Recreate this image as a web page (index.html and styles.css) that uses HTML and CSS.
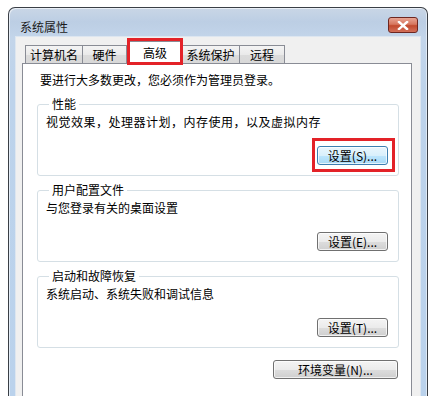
FILE: index.html
```html
<!DOCTYPE html>
<html lang="zh-CN">
<head>
<meta charset="utf-8">
<title>系统属性</title>
<link rel="stylesheet" href="styles.css">
</head>
<body>
<div class="window">
  <div class="titlebar">
    <span class="title">系统属性</span>
    <span class="close" aria-label="关闭">
      <svg width="12" height="9" viewBox="0 0 12 9"><path d="M2 1 L10 8 M10 1 L2 8" stroke="#fff" stroke-width="2.4" stroke-linecap="square" fill="none"/></svg>
    </span>
  </div>
  <div class="client">
    <div class="tabs">
      <div class="tab t1">计算机名</div>
      <div class="tab t2">硬件</div>
      <div class="tab t3 selected">高级</div>
      <div class="tab t4">系统保护</div>
      <div class="tab t5">远程</div>
    </div>
    <div class="panel">
      <div class="intro">要进行大多数更改，您必须作为管理员登录。</div>
      <div class="group">
        <div class="legend">性能</div>
        <div class="desc wide">视觉效果，处理器计划，内存使用，以及虚拟内存</div>
        <div class="actions"><span class="btn focused marked">设置(S)...</span></div>
      </div>
      <div class="group">
        <div class="legend">用户配置文件</div>
        <div class="desc">与您登录有关的桌面设置</div>
        <div class="actions"><span class="btn">设置(E)...</span></div>
      </div>
      <div class="group">
        <div class="legend">启动和故障恢复</div>
        <div class="desc">系统启动、系统失败和调试信息</div>
        <div class="actions"><span class="btn">设置(T)...</span></div>
      </div>
      <div class="envrow"><span class="btn env">环境变量(N)...</span></div>
    </div>
  </div>
</div>
</body>
</html>
```

FILE: styles.css
```css
html, body {
  margin: 0;
  padding: 0;
  background: #ffffff;
}
body {
  font-family: "Noto Sans CJK SC", "Liberation Sans", sans-serif;
  font-size: 12px;
  color: #000;
  overflow: hidden;
  height: 396px;
}
.window {
  margin: 7px 0 0 8px;
  width: 420px;
  height: 400px;
  box-sizing: border-box;
  border: 1px solid #3a3f46;
  border-bottom: none;
  border-radius: 7px 7px 0 0;
  background: linear-gradient(180deg, #c9d6e6 0px, #bccee4 14px, #c3d5ea 30px, #bdd3eb 80px, #bad2ec 100%);
  padding: 0 7px 0 7px;
  box-shadow: inset 1px 1px 0 rgba(255,255,255,0.6), inset -1px 0 0 rgba(255,255,255,0.5);
}
.titlebar {
  height: 29px;
  display: flex;
  align-items: flex-start;
  justify-content: space-between;
}
.title {
  margin: 12px 0 0 4px;
  line-height: 14px;
  color: #1b1b1b;
}
.close {
  margin: 9px 2px 0 0;
  width: 30px;
  height: 16px;
  box-sizing: border-box;
  border: 1px solid #6d2620;
  border-radius: 3px;
  background: linear-gradient(180deg, #e8a493 0%, #d7775f 45%, #c24a2e 55%, #d2705a 100%);
  display: flex;
  align-items: center;
  justify-content: center;
}
.client {
  background: #f0f0f0;
  height: 362px;
  padding: 8px 8px 0 6px;
  box-sizing: border-box;
  box-shadow: 0 0 0 1px #dde6f0;
}
.tabs {
  display: flex;
  align-items: flex-end;
  height: 19px;
  margin-bottom: -1px;
  padding-left: 3px;
}
.tab {
  box-sizing: border-box;
  height: 19px;
  border: 1px solid #898c95;
  border-left: none;
  background: linear-gradient(180deg, #f4f4f4 0%, #eaeaea 50%, #dcdcdc 51%, #d8d8d8 100%);
  text-align: center;
  line-height: 16px;
  padding-top: 1px;
  color: #000;
}
.t1 { width: 58px; border-left: 1px solid #898c95; }
.t2 { width: 44px; }
.t3 { width: 54px; }
.t4 { width: 59px; border-left: 1px solid #898c95; margin-left: -1px; }
.t5 { width: 45px; }
.tab.selected {
  position: relative;
  z-index: 1;
  height: 23px;
  background: #ffffff;
  border: 1px solid #898c95;
  border-bottom: none;
  padding-top: 3px;
  margin-left: 1px;
  margin-right: 0;
}
.tab.selected::after {
  content: "";
  position: absolute;
  left: -2px;
  right: -2px;
  top: -4px;
  bottom: -1px;
  border: 3px solid #e32228;
}
.panel {
  background: #ffffff;
  border: 1px solid #898c95;
  height: 340px;
  box-sizing: border-box;
  padding: 8px 12px 0 14px;
}
.intro {
  line-height: 16px;
  margin-left: 3px;
}
.group {
  border: 1px solid #d5dfe5;
  border-radius: 3px;
  margin-top: 14px;
  padding: 0 10px 10px 8px;
  height: 72px;
  box-sizing: border-box;
}
.intro + .group {
  margin-top: 16px;
}
.legend {
  width: fit-content;
  margin: -9px 0 0 3px;
  padding: 0 3px;
  background: #ffffff;
  line-height: 16px;
}
.desc {
  margin-top: 2px;
  line-height: 16px;
}
.desc.wide {
  letter-spacing: 0.5px;
}
.actions {
  display: flex;
  justify-content: flex-end;
  margin-top: 16px;
}
.btn {
  box-sizing: border-box;
  display: inline-block;
  width: 71px;
  height: 19px;
  border: 1px solid #707070;
  border-radius: 3px;
  background: linear-gradient(180deg, #f4f4f4 0%, #ebebeb 50%, #dddddd 51%, #cfcfcf 100%);
  text-align: center;
  line-height: 17px;
  color: #000;
  box-shadow: inset 0 0 0 1px rgba(255,255,255,0.7);
}
.btn.focused {
  border-color: #3c7fb1;
  background: linear-gradient(180deg, #eaf6fd 0%, #d9f0fc 50%, #bee6fd 51%, #a7d9f5 100%);
}
.btn.marked {
  position: relative;
}
.btn.marked::after {
  content: "";
  position: absolute;
  left: -6px;
  right: -8px;
  top: -9px;
  bottom: -8px;
  border: 3px solid #e32228;
}
.envrow {
  display: flex;
  justify-content: flex-end;
  margin-top: 12px;
  padding-right: 1px;
}
.btn.env {
  width: 125px;
}
```
